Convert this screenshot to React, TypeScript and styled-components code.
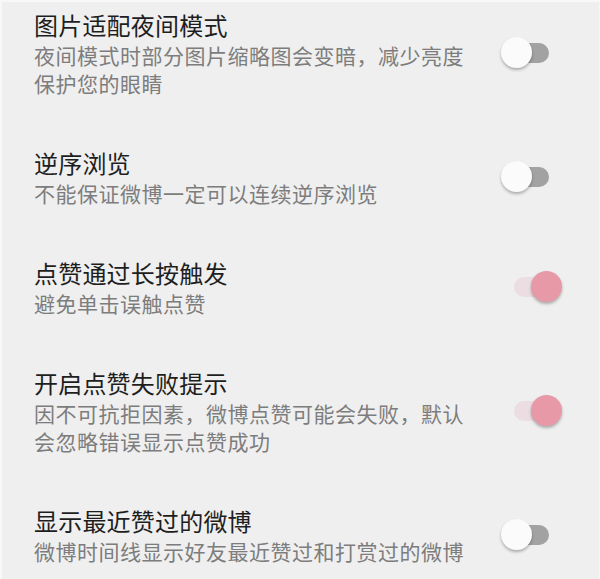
import styled, { createGlobalStyle } from 'styled-components';

const GlobalStyle = createGlobalStyle`
  html, body {
    margin: 0;
    padding: 0;
    background: #efefef;
  }
  * {
    box-sizing: border-box;
  }
`;

type Setting = {
  title: string;
  desc: string;
  on: boolean;
};

const settings: Setting[] = [
  {
    title: '图片适配夜间模式',
    desc: '夜间模式时部分图片缩略图会变暗，减少亮度保护您的眼睛',
    on: false,
  },
  {
    title: '逆序浏览',
    desc: '不能保证微博一定可以连续逆序浏览',
    on: false,
  },
  {
    title: '点赞通过长按触发',
    desc: '避免单击误触点赞',
    on: true,
  },
  {
    title: '开启点赞失败提示',
    desc: '因不可抗拒因素，微博点赞可能会失败，默认会忽略错误显示点赞成功',
    on: true,
  },
  {
    title: '显示最近赞过的微博',
    desc: '微博时间线显示好友最近赞过和打赏过的微博',
    on: false,
  },
];

const App = () => {
  return (
    <>
      <GlobalStyle />
      <Page>
        {settings.map((item) => (
          <Row key={item.title}>
            <TextBlock>
              <Title>{item.title}</Title>
              <Desc>{item.desc}</Desc>
            </TextBlock>
            <Switch on={item.on}>
              <Track on={item.on} />
              <Knob on={item.on} />
            </Switch>
          </Row>
        ))}
      </Page>
    </>
  );
};

export default App;

const Page = styled.div`
  width: 600px;
  height: 579px;
  overflow: hidden;
  background: #efefef;
  border-top: 2px solid #f8f8f8;
  border-left: 2px solid #f8f8f8;
  border-right: 1px solid #f6f6f6;
  padding: 7px 37px 0 32px;
  display: flex;
  flex-direction: column;
  gap: 50px;
  font-family: 'Noto Sans CJK SC', 'Noto Sans', sans-serif;
`;

const Row = styled.div`
  display: flex;
  align-items: center;
  justify-content: space-between;
`;

const TextBlock = styled.div`
  width: 445px;
  display: flex;
  flex-direction: column;
`;

const Title = styled.div`
  font-size: 24px;
  line-height: 32px;
  color: #1e1e1e;
  letter-spacing: 0.2px;
`;

const Desc = styled.div`
  font-size: 21px;
  line-height: 28px;
  color: #7d7d7d;
  letter-spacing: 0.5px;
`;

const Switch = styled.div<{ on: boolean }>`
  position: relative;
  width: 61px;
  height: 32px;
  flex-shrink: 0;
`;

const Track = styled.div<{ on: boolean }>`
  position: absolute;
  top: 6px;
  left: ${(p) => (p.on ? '13px' : '3px')};
  width: 45px;
  height: 20px;
  border-radius: 10px;
  background: ${(p) => (p.on ? '#ebdde1' : '#a2a2a2')};
`;

const Knob = styled.div<{ on: boolean }>`
  position: absolute;
  top: 0;
  left: ${(p) => (p.on ? '30px' : '0')};
  width: 31px;
  height: 31px;
  border-radius: 50%;
  background: ${(p) => (p.on ? '#e799a8' : '#fbfbfb')};
  box-shadow: 0 2px 3px rgba(0, 0, 0, 0.28);
`;
